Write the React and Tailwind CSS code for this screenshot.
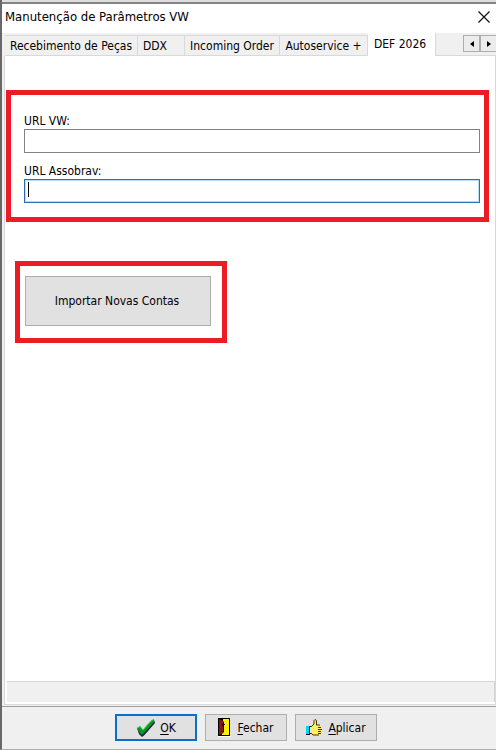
import { useState } from 'react';

const TABS = [
  { id: 'pecas', label: 'Recebimento de Peças', width: 'w-[133px]' },
  { id: 'ddx', label: 'DDX', width: 'w-[47px] pr-3' },
  { id: 'order', label: 'Incoming Order', width: 'w-[95px]' },
  { id: 'autoservice', label: 'Autoservice +', width: 'w-[88px]' },
  { id: 'def', label: 'DEF 2026', width: 'w-[68px] pr-[3px] pb-[2px]' },
];

// --- Icons ---
const CloseIcon = () => (
  <svg width="12" height="12" viewBox="0 0 12 12" fill="none" stroke="#111" strokeWidth="1.2">
    <path d="M.5.5l11 11M11.5.5l-11 11" />
  </svg>
);

const ArrowIcon = ({ left }) => (
  <svg width="4" height="6" viewBox="0 0 4 6" fill="#000">
    {left ? <path d="M4 0v6L0 3z" /> : <path d="M0 0v6l4-3z" />}
  </svg>
);

const CheckIcon = () => (
  <svg width="20" height="18" viewBox="0 0 20 18">
    <path d="M1 9l3-1 3 3L15 2l3-1 1 3L8.500 16 6 18l-3-3z" fill="#17233f" />
    <path d="M1 9l3-2 3 4L15 2l3-2v3L8 14l-2 2-2-2z" fill="#089a20" />
    <path d="M1.500 9L4 7.500l3 3.500 8-9 2.500-1.500" fill="none" stroke="#3fd455" strokeWidth="1" />
  </svg>
);

const DoorIcon = () => (
  <svg width="13" height="19" viewBox="0 0 13 19">
    <path d="M0 0h12v18H0z" fill="#000" />
    <path d="M1 1l4 2v12l-4 2z" fill="#861616" />
    <path d="M5 1h6v16H4v-1l2-2V4L5 3z" fill="#fff000" />
    <path d="M4 6h3v1H6v2H5z" fill="#000" />
    <path d="M0 18h13v1H0z" fill="#fff" />
  </svg>
);

const ThumbIcon = () => (
  <svg width="16" height="17" viewBox="0 0 16 17">
    <path d="M0 7h4v8H0z" fill="#00d7ef" />
    <path d="M3 7h2v1H4v6h1v1H3zM0 15h4v1H0z" fill="#111" />
    <path d="M5 8l3-3V1h2l1 1v4h3l1 2v6l-2 2H7l-2-2z" fill="#ffed62" />
    <path
      d="M5 8l3-3V1.500L9 .5l1.500 1V6H14M5 14l2 2h6"
      fill="none"
      stroke="#3b3510"
      strokeWidth="1"
    />
    <path d="M12 8.500h3M12 10.500h4M12 12.500h3M12 14.500h3" stroke="#3b3510" strokeWidth="1" />
  </svg>
);

// --- Footer button with an underlined access key ---
const ActionButton = ({ icon, label, primary, onClick }) => (
  <button
    type="button"
    accessKey={label[0]}
    onClick={onClick}
    className={`flex h-[27px] w-[82px] items-center justify-center bg-[#e1e1e1] text-[12px] ${
      primary ? 'gap-1 border-2 border-[#0b6fc8]' : 'gap-1.5 border border-[#adadad]'
    }`}
  >
    {icon}
    <span>
      <span className="underline underline-offset-2">{label[0]}</span>
      {label.slice(1)}
    </span>
  </button>
);

const UrlField = ({ id, label, value, onChange, autoFocus }) => {
  const [focused, setFocused] = useState(Boolean(autoFocus));

  return (
    <div className="flex flex-col">
      <label htmlFor={id} className="text-[12px] leading-4">
        {label}
      </label>
      <div className="relative">
        <input
          id={id}
          type="text"
          value={value}
          onChange={(e) => onChange(e.target.value)}
          onFocus={() => setFocused(true)}
          onBlur={() => setFocused(false)}
          autoFocus={autoFocus}
          className={`block h-6 w-full border border-[#7f8386] bg-white px-[3px] text-[12px] outline-none focus:border-[#2671b5] focus:ring-1 focus:ring-inset focus:ring-[#b5ddf7] ${
            value === '' ? 'caret-transparent' : 'caret-black'
          }`}
        />
        {/* Steady caret while the field is still empty */}
        {focused && value === '' && (
          <span className="pointer-events-none absolute top-[3px] left-1 h-[15px] w-px bg-black" />
        )}
      </div>
    </div>
  );
};

export default function App() {
  const [activeTab, setActiveTab] = useState('def');
  const [urlVw, setUrlVw] = useState('');
  const [urlAssobrav, setUrlAssobrav] = useState('');

  return (
    <div className="flex min-h-screen flex-col border-b border-l-2 border-b-[#adadad] border-l-[#68686a] bg-[#f0f0f0] font-['DejaVu_Sans_Condensed','DejaVu_Sans',sans-serif] text-black">
      <div className="h-[4px] border-b-2 border-[#858585] bg-[#dedede]" />

      <header className="flex h-[29px] items-center justify-between bg-white pr-1.5 pb-1 pl-[3px]">
        <h1 className="text-[13px] leading-5">Manutenção de Parâmetros VW</h1>
        <button type="button" aria-label="Fechar janela" className="flex">
          <CloseIcon />
        </button>
      </header>

      <nav className="flex h-[23px] items-start pl-[3px]">
        <div role="tablist" className="flex h-full items-end">
          {TABS.map((tab) => (
            <button
              key={tab.id}
              type="button"
              role="tab"
              aria-selected={tab.id === activeTab}
              onClick={() => setActiveTab(tab.id)}
              className={`flex items-center justify-center border-r border-[#d9d9d9] text-[12px] whitespace-nowrap ${tab.width} ${
                tab.id === activeTab ? 'h-[23px] bg-white' : 'h-[21px] border-t border-b bg-[#f0f0f0]'
              }`}
            >
              {tab.label}
            </button>
          ))}
        </div>
        <div className="flex h-full flex-1 items-start justify-end border-b border-[#d9d9d9] pt-[2px]">
          <button
            type="button"
            aria-label="Abas anteriores"
            className="flex h-[17px] w-[17px] items-center justify-center border border-[#adadad] bg-[#ececec]"
          >
            <ArrowIcon left />
          </button>
          <button
            type="button"
            aria-label="Próximas abas"
            className="flex h-[17px] w-4 items-center justify-center border border-r-0 border-[#adadad] bg-[#ececec]"
          >
            <ArrowIcon />
          </button>
        </div>
      </nav>

      <main className="ml-[2px] flex flex-1 flex-col border-r border-b border-l border-[#d9d9d9] bg-white">
        <div className="flex flex-1 flex-col items-start gap-[39px] pt-[34px] pr-1.5 pl-px">
          <section className="flex w-full flex-col gap-[10px] border-[5px] border-[#ed1c24] pt-[18px] pr-1 pb-[14px] pl-[13px]">
            <UrlField id="url-vw" label="URL VW:" value={urlVw} onChange={setUrlVw} />
            <UrlField
              id="url-assobrav"
              label="URL Assobrav:"
              value={urlAssobrav}
              onChange={setUrlAssobrav}
              autoFocus
            />
          </section>

          <section className="ml-[9px] border-[5px] border-[#ed1c24] pt-[10px] pr-[11px] pb-3 pl-[5px]">
            <button type="button" className="h-[50px] w-[186px] border border-[#adadad] bg-[#e1e1e1] pr-[2px] text-[12px]">
              Importar Novas Contas
            </button>
          </section>
        </div>

        <div className="mb-[2px] ml-[2px] h-[21px] border-t border-r border-[#d4d4d4] bg-[#f0f0f0]" />
      </main>

      <footer className="mt-[1px] flex justify-center gap-2 border-t border-[#a0a0a0] pt-[7px] pr-[6px] pb-2">
        <ActionButton icon={<CheckIcon />} label="OK" primary />
        <ActionButton icon={<DoorIcon />} label="Fechar" />
        <ActionButton icon={<ThumbIcon />} label="Aplicar" />
      </footer>
    </div>
  );
}
